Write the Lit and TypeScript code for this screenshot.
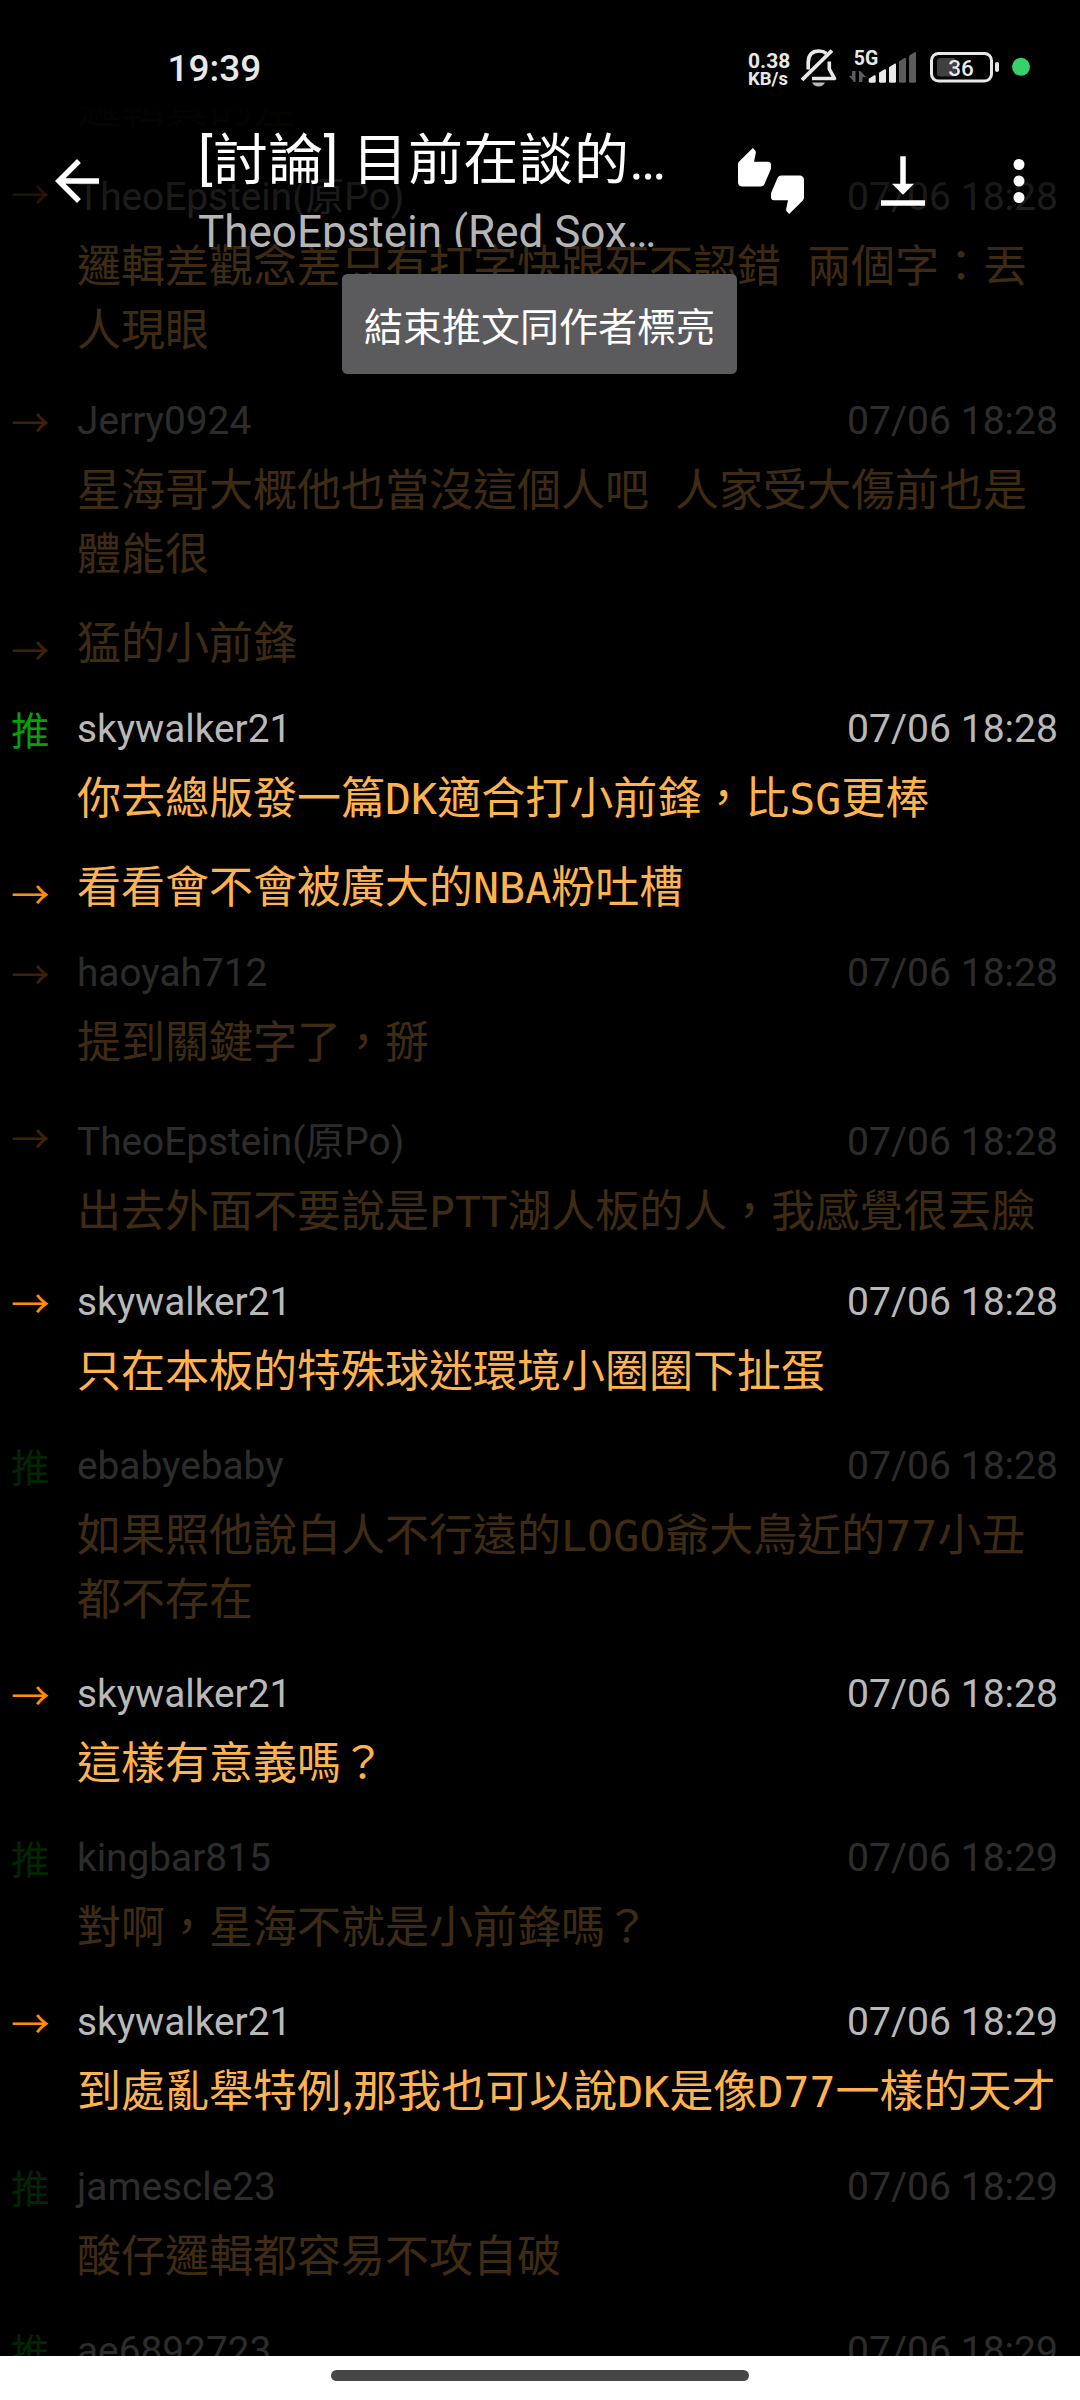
import { LitElement, html, css, svg, nothing } from "lit";
import { customElement, property } from "lit/decorators.js";
import { classMap } from "lit/directives/class-map.js";

interface Push {
  mark?: "推" | "→";
  author?: string;
  time?: string;
  text?: string;
  active?: boolean;
}

const PUSHES: Push[] = [
  { text: "邏輯真的差" },
  { mark: "→", author: "TheoEpstein(原Po)", time: "07/06 18:28", text: "邏輯差觀念差只有打字快跟死不認錯 兩個字：丟人現眼" },
  { mark: "→", author: "Jerry0924", time: "07/06 18:28", text: "星海哥大概他也當沒這個人吧 人家受大傷前也是體能很" },
  { mark: "→", text: "猛的小前鋒" },
  { mark: "推", author: "skywalker21", time: "07/06 18:28", text: "你去總版發一篇DK適合打小前鋒，比SG更棒", active: true },
  { mark: "→", text: "看看會不會被廣大的NBA粉吐槽", active: true },
  { mark: "→", author: "haoyah712", time: "07/06 18:28", text: "提到關鍵字了，掰" },
  { mark: "→", author: "TheoEpstein(原Po)", time: "07/06 18:28", text: "出去外面不要說是PTT湖人板的人，我感覺很丟臉" },
  { mark: "→", author: "skywalker21", time: "07/06 18:28", text: "只在本板的特殊球迷環境小圈圈下扯蛋", active: true },
  { mark: "推", author: "ebabyebaby", time: "07/06 18:28", text: "如果照他說白人不行遠的LOGO爺大鳥近的77小丑都不存在" },
  { mark: "→", author: "skywalker21", time: "07/06 18:28", text: "這樣有意義嗎？", active: true },
  { mark: "推", author: "kingbar815", time: "07/06 18:29", text: "對啊，星海不就是小前鋒嗎？" },
  { mark: "→", author: "skywalker21", time: "07/06 18:29", text: "到處亂舉特例,那我也可以說DK是像D77一樣的天才", active: true },
  { mark: "推", author: "jamescle23", time: "07/06 18:29", text: "酸仔邏輯都容易不攻自破" },
  { mark: "推", author: "ae6892723", time: "07/06 18:29" },
];

@customElement("push-row")
class PushRow extends LitElement {
  @property({ attribute: false }) push!: Push;

  static styles = css`
    :host { display: block; }
    .row {
      display: grid;
      grid-template-columns: 66px 1fr;
      padding: 0 22px 0 11px;
      opacity: 0.24;
    }
    .active { opacity: 1; }
    .mark {
      padding-top: 18px;
      font-size: 38.5px;
      line-height: 55.7px;
      font-family: "Noto Sans CJK TC", sans-serif;
      color: #ff8c0a;
    }
    .up { color: #08a008; }
    .body { padding: 22px 0 19.6px; }
    .op .body { padding: 26.5px 0 15.4px; }
    .follow .body { padding: 6px 0 10px; }
    .meta {
      display: flex;
      justify-content: space-between;
      height: 45px;
      line-height: 48px;
      margin-bottom: 14px;
      font-size: 39.1px;
      color: #b9b9b9;
      font-family: Roboto, "Noto Sans CJK TC", sans-serif;
      white-space: nowrap;
    }
    .author { font-size: 38.8px; }
    .text {
      font-size: 44px;
      line-height: 63.7px;
      color: #ffb350;
      font-family: "Noto Sans CJK TC", sans-serif;
    }
    .mono {
      font-family: "DejaVu Sans Mono", monospace;
      font-size: 43.3px;
      line-height: 1;
    }
  `;

  private pieces(text: string) {
    return text
      .split(/([A-Za-z0-9 ]+)/)
      .map((p) => (/^[A-Za-z0-9 ]+$/.test(p) ? html`<span class="mono">${p}</span>` : p));
  }

  render() {
    const p = this.push;
    const row = { row: true, active: !!p.active, follow: !p.author, op: !!p.author?.includes("原Po") };
    return html`<div class=${classMap(row)}>
      <div class=${classMap({ mark: true, up: p.mark === "推" })}>${p.mark ?? nothing}</div>
      <div class="body">
        ${p.author ? html`<div class="meta"><span class="author">${p.author}</span><span>${p.time}</span></div>` : nothing}
        ${p.text ? html`<div class="text">${this.pieces(p.text)}</div>` : nothing}
      </div>
    </div>`;
  }
}

@customElement("status-bar")
class StatusBar extends LitElement {
  static styles = css`
    :host {
      display: flex;
      height: 107px;
      box-sizing: border-box;
      padding: 30px 47px 0 167.5px;
      background: #000;
      color: #e8e8e8;
      font-family: Roboto, sans-serif;
    }
    .clock { font-size: 37px; font-weight: 500; line-height: 77px; flex: 1; }
    .net { width: 53px; padding-top: 21px; font-weight: 700; }
    .rate { font-size: 21px; line-height: 20px; }
    .unit { font-size: 18.5px; line-height: 17px; }
    svg { display: block; }
    .cell { font-size: 19.5px; font-weight: 700; }
    .level { font-size: 22.5px; font-weight: 500; }
  `;

  render() {
    const bars = [
      [67.7, 45.3, "#e8e8e8"],
      [78, 39.3, "#e8e8e8"],
      [88, 33.7, "#e8e8e8"],
      [98, 28, "#5c5c5c"],
      [108, 22.3, "#5c5c5c"],
    ] as const;
    return html`
      <div class="clock">19:39</div>
      <div class="net"><div class="rate">0.38</div><div class="unit">KB/s</div></div>
      <svg width="232" height="70" viewBox="0 0 232 70">
        <g fill="none" stroke="#e8e8e8" stroke-width="3.6" stroke-linejoin="round">
          <path d="M7.2 39.5V33Q7.2 21 18 21Q22.5 21 25.5 23.5" />
          <path d="M28.3 31.5V39L33.5 48.5H11" />
          <path d="M1 50L31 20.5" stroke-width="3.8" />
        </g>
        <path d="M11 52.5h13q-2 4-6.5 4q-4.5 0-6.5-4z" fill="#b8b8b8" />
        <text class="cell" x="52.7" y="35" fill="#e8e8e8">5G</text>
        <path d="M54.5 41v11h-1.5l-5-6h3v-5zM58 52v-11h1.5l5.5 6h-3.5v5z" fill="#5c5c5c" />
        ${bars.map(
          ([x, top, fill]) =>
            svg`<path d=${`M${x} 51.2V${top + 3.5}L${x + 5.5} ${top}q1.5-.5 1.5 1V51.2q0 1.5-1.5 1.5h-4q-1.5 0-1.5-1.5z`} fill=${fill} />`,
        )}
        <rect x="130.5" y="23.5" width="60" height="27.5" rx="7" fill="none" stroke="#e8e8e8" stroke-width="3" />
        <rect x="136" y="28" width="19" height="18.5" rx="3.5" fill="#404040" />
        <rect x="194" y="32" width="4" height="10" rx="2" fill="#e8e8e8" />
        <text class="level" x="160" y="45.5" text-anchor="middle" fill="#e8e8e8">36</text>
        <circle cx="220" cy="36.8" r="9" fill="#36d16a" />
      </svg>
    `;
  }
}

@customElement("top-bar")
class TopBar extends LitElement {
  static styles = css`
    :host {
      display: flex;
      height: 151px;
      box-sizing: border-box;
      padding: 0 28px 0 44px;
      background: linear-gradient(rgba(0, 0, 0, 0.92), rgba(0, 0, 0, 0.86) 8%, rgba(0, 0, 0, 0.4) 60%, rgba(0, 0, 0, 0));
      font-family: Roboto, "Noto Sans CJK TC", sans-serif;
      white-space: nowrap;
    }
    svg { width: 66px; height: 66px; margin-top: 41px; fill: #fff; flex: none; }
    .titles { flex: none; width: 560px; height: 140px; padding-left: 88px; box-sizing: border-box; overflow: hidden; }
    .title { font-size: 55px; line-height: 80px; height: 80px; margin-top: 12.5px; letter-spacing: 0.35px; color: #fff; }
    .sub { font-size: 44px; line-height: 52px; height: 52px; margin-top: 6.5px; color: #b5b5b5; }
    .actions { display: flex; margin-left: 68px; }
    .save { margin-left: 66px; }
    .more { margin-left: 50px; }
  `;

  render() {
    return html`
      <svg viewBox="0 0 24 24"><path d="M20 11H7.83l5.59-5.59L12 4l-8 8 8 8 1.41-1.41L7.83 13H20v-2z" /></svg>
      <div class="titles">
        <div class="title">[討論] 目前在談的…</div>
        <div class="sub">TheoEpstein (Red Sox…</div>
      </div>
      <div class="actions">
        <svg viewBox="0 0 24 24">
          <path d="M12 6c0-.55-.45-1-1-1H5.82l.66-3.18.02-.23c0-.31-.13-.59-.33-.8L5.38 0 .44 4.94C.17 5.21 0 5.59 0 6v6.5c0 .83.67 1.5 1.5 1.5h6.75c.62 0 1.15-.38 1.38-.91l2.26-5.29c.07-.17.11-.36.11-.55V6zm10.5 4h-6.75c-.62 0-1.15.38-1.38.91l-2.26 5.29c-.07.17-.11.36-.11.55V18c0 .55.45 1 1 1h5.18l-.66 3.18-.02.24c0 .31.13.59.33.8l.79.78 4.94-4.94c.27-.27.44-.65.44-1.06v-6.5c0-.83-.67-1.5-1.5-1.5z" />
        </svg>
        <svg class="save" viewBox="0 0 24 24"><path d="M16 13h-3V3h-2v10H8l4 4 4-4zM4 19v2h16v-2H4z" /></svg>
        <svg class="more" viewBox="0 0 24 24">
          <circle cx="12" cy="6" r="2" /><circle cx="12" cy="12" r="2" /><circle cx="12" cy="18" r="2" />
        </svg>
      </div>
    `;
  }
}

@customElement("app-root")
class AppRoot extends LitElement {
  static styles = css`
    :host { display: block; width: 1080px; height: 2400px; }
    .screen {
      position: relative;
      display: flex;
      flex-direction: column;
      width: 1080px;
      height: 2400px;
      overflow: hidden;
      background: #000;
    }
    .list { flex: 1; min-height: 0; overflow: hidden; padding-top: 67px; box-sizing: border-box; }
    .list push-row:first-child { opacity: 0.6; }
    .overlay { position: absolute; inset: 0 0 auto 0; }
    .toast {
      position: absolute;
      top: 274px;
      left: 342px;
      width: 395px;
      height: 99.7px;
      box-sizing: border-box;
      padding-top: 25.5px;
      text-align: center;
      border-radius: 5.5px;
      background: #5b5b5d;
      color: #fff;
      font-family: Roboto, "Noto Sans CJK TC", sans-serif;
      font-size: 39px;
      line-height: 56px;
      white-space: nowrap;
    }
    .nav {
      display: flex;
      justify-content: center;
      height: 44px;
      padding-top: 14px;
      box-sizing: border-box;
      background: #fff;
    }
    .pill { width: 418px; height: 11px; border-radius: 6px; background: #474747; }
  `;

  render() {
    return html`
      <div class="screen">
        <div class="list">${PUSHES.map((p) => html`<push-row .push=${p}></push-row>`)}</div>
        <div class="nav"><div class="pill"></div></div>
        <div class="overlay"><status-bar></status-bar><top-bar></top-bar></div>
        <div class="toast">結束推文同作者標亮</div>
      </div>
    `;
  }
}
